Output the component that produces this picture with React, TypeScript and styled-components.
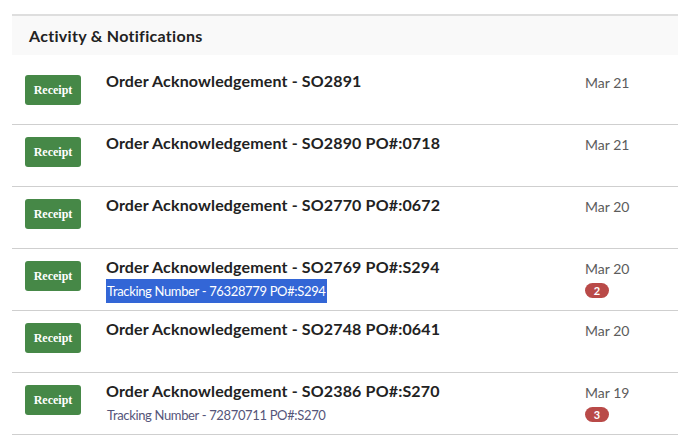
import React from "react";
import styled, { createGlobalStyle } from "styled-components";

const GlobalStyle = createGlobalStyle`
    body {
        margin: 0;
        background: #ffffff;
        font-family: "Lato", "Open Sans", sans-serif;
    }
`;

const Panel = styled.div`
    margin: 14px 10px 0 12px;
    border-top: 2px solid #dedede;
`;

const PanelHeader = styled.div`
    height: 39px;
    background: #f9f9f9;
    padding-left: 17px;
    display: flex;
    align-items: center;
    font-size: 16px;
    font-weight: 700;
    letter-spacing: 0.3px;
    color: #222;
`;

const List = styled.ul`
    list-style: none;
    margin: 0;
    padding: 8px 0 0;
`;

const Row = styled.li`
    display: grid;
    grid-template-columns: 56px 1fr 93px;
    column-gap: 25px;
    height: 61px;
    box-sizing: content-box;
    padding: 0 0 0 13px;
    border-bottom: 1px solid #cfcfcf;
`;

const ReceiptButton = styled.button`
    margin-top: 12px;
    width: 56px;
    height: 30px;
    border: none;
    border-radius: 3px;
    background: #468847;
    color: #fff;
    font-family: "Liberation Serif", serif;
    font-size: 12px;
    font-weight: 700;
    padding: 0;
`;

const Content = styled.div`
    padding-top: 8px;
`;

const Title = styled.div`
    font-size: 16px;
    font-weight: 700;
    letter-spacing: 0.15px;
    line-height: 20px;
    color: #222;
`;

const Subtitle = styled.span<{ $selected?: boolean }>`
    display: inline-block;
    margin-top: 2px;
    padding: 0 1px;
    font-size: 13px;
    letter-spacing: -0.35px;
    line-height: 24px;
    color: ${(p) => (p.$selected ? "#ffffff" : "#55557a")};
    background: ${(p) => (p.$selected ? "#3366d6" : "transparent")};
`;

const Meta = styled.div`
    padding-top: 11px;
    display: flex;
    flex-direction: column;
    align-items: flex-start;
`;

const DateText = styled.div`
    font-size: 14px;
    line-height: 18px;
    color: #5c5c5c;
`;

const Badge = styled.span`
    margin-top: 5px;
    min-width: 24px;
    height: 15px;
    border-radius: 8px;
    background: #b94a48;
    color: #fff;
    font-size: 11px;
    font-weight: 700;
    display: flex;
    align-items: center;
    justify-content: center;
`;

type Notification = {
    title: string;
    date: string;
    tracking?: string;
    selected?: boolean;
    count?: number;
};

const notifications: Notification[] = [
    { title: "Order Acknowledgement - SO2891", date: "Mar 21" },
    { title: "Order Acknowledgement - SO2890 PO#:0718", date: "Mar 21" },
    { title: "Order Acknowledgement - SO2770 PO#:0672", date: "Mar 20" },
    {
        title: "Order Acknowledgement - SO2769 PO#:S294",
        date: "Mar 20",
        tracking: "Tracking Number - 76328779 PO#:S294",
        selected: true,
        count: 2,
    },
    { title: "Order Acknowledgement - SO2748 PO#:0641", date: "Mar 20" },
    {
        title: "Order Acknowledgement - SO2386 PO#:S270",
        date: "Mar 19",
        tracking: "Tracking Number - 72870711 PO#:S270",
        count: 3,
    },
];

export default function App() {
    return (
        <>
            <GlobalStyle />
            <Panel>
                <PanelHeader>Activity &amp; Notifications</PanelHeader>
                <List>
                    {notifications.map((n) => (
                        <Row key={n.title}>
                            <div>
                                <ReceiptButton type="button">Receipt</ReceiptButton>
                            </div>
                            <Content>
                                <Title>{n.title}</Title>
                                {n.tracking && (
                                    <Subtitle $selected={n.selected}>{n.tracking}</Subtitle>
                                )}
                            </Content>
                            <Meta>
                                <DateText>{n.date}</DateText>
                                {n.count !== undefined && <Badge>{n.count}</Badge>}
                            </Meta>
                        </Row>
                    ))}
                </List>
            </Panel>
        </>
    );
}
